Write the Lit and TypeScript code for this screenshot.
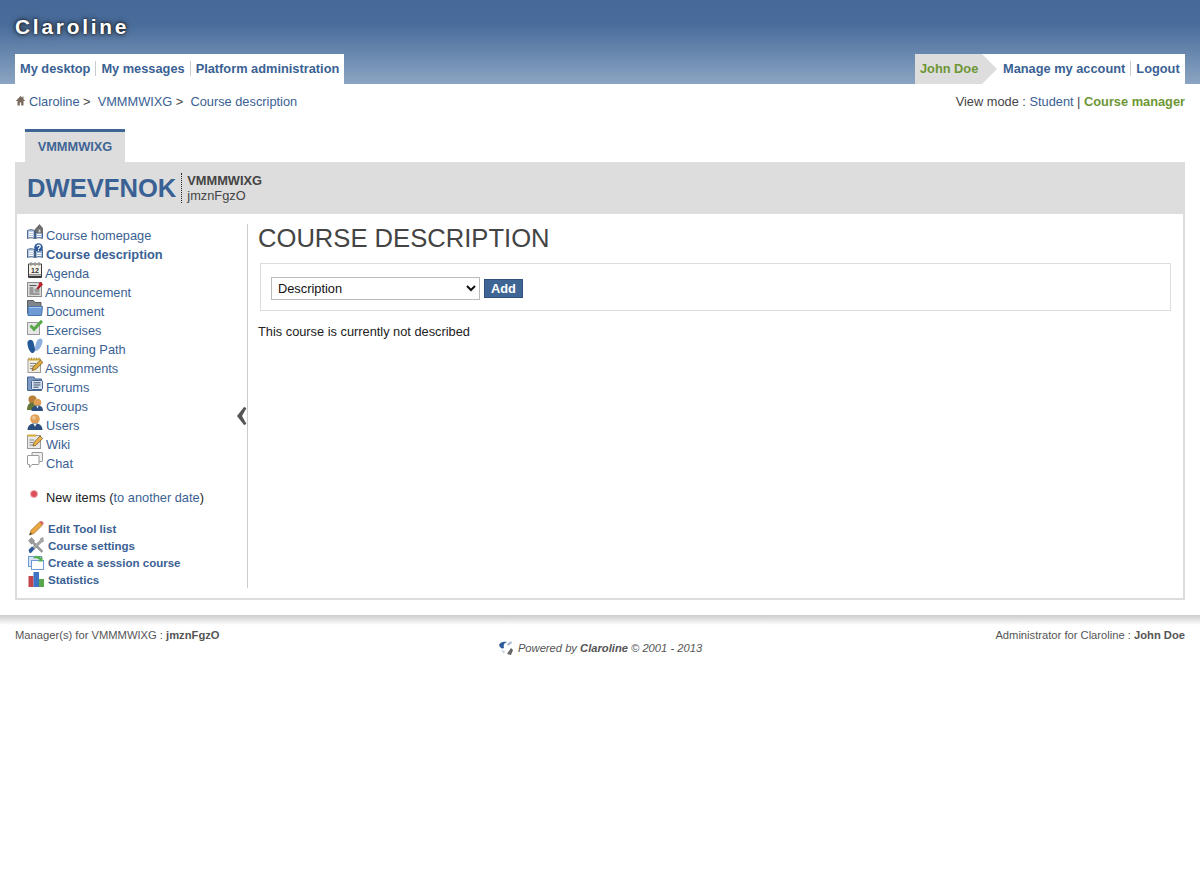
import { LitElement, html, css, svg } from 'lit';
import { customElement } from 'lit/decorators.js';

const book = svg`<path d="M.5 6.500c2-1 5-1 7 0v8c-2-1-5-1-7 0z" fill="#b9cbe2" stroke="#4f6a8f"/><path d="M8.500 6.500c2-1 5-1 7 0v8c-2-1-5-1-7 0z" fill="#9fb8d8" stroke="#4f6a8f"/><path d="M2 8.500h4M2 10.500h4M2 12.500h4M10 10.500h4M10 12.500h4" stroke="#fff"/><path d="M7.500 6h1v9h-1z" fill="#3d5778"/>`;

const icons: Record<string, unknown> = {
  home: svg`<path d="M5 1 .3 6h1.700v4.500h2.300V7.500h1.400v3H8V6h1.700L8 4.200V1.500H7v1.300z" fill="#7a6a60"/>`,
  homepage: svg`${book}<path d="M8 5.500 12.500.5 16 4.500V9H9z" fill="#6d6d6d" stroke="#555" stroke-width=".5"/><rect x="11.500" y="5.500" width="2" height="3" fill="#c9c9c9"/>`,
  description: svg`${book}<circle cx="11.500" cy="4.500" r="4.300" fill="#2d5a9a"/><path d="M9.800 3.500c.5-1.800 3.500-1.800 3.500 0 0 1.200-1.800 1.200-1.800 2.800" stroke="#fff" stroke-width="1.200" fill="none"/><circle cx="11.500" cy="7.500" r=".7" fill="#fff"/>`,
  agenda: svg`<rect x="1" y="1.500" width="14" height="14.500" rx="1" fill="#3a3a3a"/><rect x="2" y="2.500" width="12" height="10" fill="#f4f2e8"/><path d="M2 13h12v1H2z" fill="#bbb"/><path d="M4 0v4M8 0v4M12 0v4" stroke="#999" stroke-width="1.200"/><text x="8" y="10.500" font-size="7" font-weight="bold" text-anchor="middle" fill="#333" font-family="Liberation Sans, sans-serif">12</text>`,
  announcement: svg`<rect x=".5" y="1.500" width="14" height="14" fill="#dcdcdc" stroke="#8a8a8a"/><path d="M2.500 4.500h7M2.500 7h4M2.500 9h4M2.500 11h4M2.500 13h10" stroke="#555"/><rect x="7.500" y="7.500" width="5" height="4" fill="#9a9a9a"/><path d="M9.500 7.500l4-6 2.500 2-5 5z" fill="#a81c28"/><circle cx="13.500" cy="3" r="1.800" fill="#c4222f"/>`,
  document: svg`<path d="M.5 .5h6l1.500 2h6v11H.5z" fill="#80858c" stroke="#5d5d5d"/><path d="M1 6.500h14.500L14.500 15.500H1z" fill="#6d9ad6" stroke="#4a74aa"/><path d="M2 7.500h12.500" stroke="#a9c6ec"/>`,
  exercises: svg`<rect x=".5" y="3.500" width="12" height="12" fill="#e6e6e6" stroke="#999"/><path d="M2.500 7.500 4.500 5.500 7 8 14 .8 16 3 7 12.500z" fill="#59a84a"/>`,
  path: svg`<path d="M.5 4c1.500-3 5-3 6 .5l1.500 6c.5 3-1.500 5-3 4.500C2.500 14 0 8 .5 4z" fill="#245796"/><path d="M8 13c0-5 1-10 3.500-12 2.500-1.500 4.500 0 4 3-.5 4-3.500 9-7.500 9z" fill="#8db0de"/>`,
  assignments: svg`<rect x="1" y="2.500" width="12.500" height="13" fill="#f1eee0" stroke="#999"/><path d="M1 1.500h12.500v2H1z" fill="#d5ac3a"/><path d="M2 .5v2M4.500 .5v2M7 .5v2M9.500 .5v2M12 .5v2" stroke="#8a7a40" stroke-width=".7"/><path d="M3 6.500h6M3 9h4M3 11.500h3" stroke="#888"/><path d="M5 13.500l1-3.500 7.500-7 2.500 2.500-7.500 7z" fill="#dca83f" stroke="#6e5218" stroke-width=".7"/>`,
  forums: svg`<path d="M.5 1h6.500l1 2h6.500v11.500H.5z" fill="#7d9bc5" stroke="#47658f"/><rect x="4.500" y="4.500" width="11" height="9" rx="1" fill="#d6e4f4" stroke="#47658f"/><path d="M6.500 6.800h7M6.500 9h7M6.500 11.200h5" stroke="#3e4f66"/>`,
  groups: svg`<circle cx="5.500" cy="4.500" r="4" fill="#b9803a"/><path d="M0 15c0-5 2-7.500 5.500-7.500S10 10 10 15z" fill="#66773a"/><circle cx="10.500" cy="7.500" r="3.800" fill="#e0a058"/><path d="M4.500 16c0-3.800 2.500-5.500 6-5.500S16 12.200 16 16z" fill="#2c4f7e"/><path d="M9.300 10.800h2.400l-1.200 2.700z" fill="#e6eef7"/>`,
  users: svg`<circle cx="8" cy="5" r="4.800" fill="#e0a058"/><circle cx="7" cy="3.800" r="2" fill="#efc48f"/><path d="M.5 16c0-4.500 3.200-6.800 7.500-6.800s7.500 2.300 7.500 6.800z" fill="#2c4f7e"/><path d="M6 9.500h4L8 12.800z" fill="#eef2f7"/>`,
  wiki: svg`<rect x=".5" y="2.500" width="13" height="13" fill="#e8e8e8" stroke="#999"/><path d="M.5 1.500h9v2h-9z" fill="#d5ac3a"/><path d="M2.500 7h5M2.500 9.500h4M2.500 12h4" stroke="#888"/><path d="M6 13l1-3.500 6-6.500 2.700 2.500-7 7z" fill="#eab04a" stroke="#6e5218" stroke-width=".7"/>`,
  chat: svg`<path d="M5 .5h10c.5 0 .5 .5 .5 .5v8c0 .5-.5 .5-.5 .5H5z" fill="#efefef" stroke="#9a9a9a"/><path d="M1 3.500h10.500c.5 0 .5 .5 .5 .5v8c0 .5-.5 .5-.5 .5H5L2.500 15.500v-3H1c-.5 0-.5-.5-.5-.5V4c0-.5 .5-.5 .5-.5z" fill="#fff" stroke="#9a9a9a"/>`,
  dot: svg`<circle cx="8" cy="8" r="3.600" fill="#dc4f59" stroke="#f0b3b7"/>`,
  edit: svg`<path d="M1.500 15 3 10.200 11.500 2l3 3-8.500 8.500z" fill="#eaa63f" stroke="#8d6320" stroke-width=".6"/><path d="M11.500 2l3 3 1-1.200c.5-1-1.500-3.300-2.800-2.800z" fill="#d9635f"/><path d="M1.500 15 2.300 12.400 4 14z" fill="#333"/>`,
  settings: svg`<path d="M.5 3.500 3.500.5l3 3-.5 1.500 9 9-1.500 1.500-9-9-1.500.5z" fill="#9a9a9a" stroke="#777" stroke-width=".4"/><path d="M15 .5l-2.500 1-.5 2-8 7 2 2 8-7.500 1.500-.5z" fill="#a8a8a8" stroke="#777" stroke-width=".4"/><path d="M.5 13l3.500-3.500 2.500 2.500-3.500 4H1.500z" fill="#2d5a9a"/>`,
  session: svg`<rect x=".5" y="2.500" width="13" height="10" fill="#d6e4f5" stroke="#6e9bd6"/><rect x="3.500" y="6.500" width="12" height="9" fill="#fff" stroke="#6e9bd6"/><path d="M5 4.500c2-3.500 6-3.500 8-.5l1.500-1.200v4.700H10l1.700-1.500c-1.700-2-4.200-2.200-6.700-1.500z" fill="#55b04f"/>`,
  stats: svg`<rect x=".5" y="5" width="5" height="11" fill="#c4444c"/><rect x="5.500" y="1" width="5.500" height="15" fill="#3f74c4"/><rect x="11" y="8" width="5" height="8" fill="#5aa64c"/>`,
  logo: svg`<path d="M1 5c1-3 5-4 8-3-3 1-4 3-3 6-2 1-4 0-5-3z" fill="#2d5a9a"/><path d="M9 4l4-3 1 2-4 3z" fill="#aab8cc"/><path d="M3 10l4 1-1 3z" fill="#ccd4e0"/><path d="M9 14l4-6 2 2-2 5z" fill="#666"/>`,
};

const tools = [
  ['homepage', 'Course homepage'],
  ['description', 'Course description', 'current'],
  ['agenda', 'Agenda', 'tight'],
  ['announcement', 'Announcement', 'tight'],
  ['document', 'Document'],
  ['exercises', 'Exercises'],
  ['path', 'Learning Path'],
  ['assignments', 'Assignments', 'tight'],
  ['forums', 'Forums'],
  ['groups', 'Groups'],
  ['users', 'Users'],
  ['wiki', 'Wiki'],
  ['chat', 'Chat'],
];

const courseLinks = [
  ['edit', 'Edit Tool list'],
  ['settings', 'Course settings'],
  ['session', 'Create a session course'],
  ['stats', 'Statistics'],
];

@customElement('app-root')
export class AppRoot extends LitElement {
  static styles = css`
    :host {
      display: block;
      font-family: 'Liberation Sans', Arial, sans-serif;
      font-size: 12.8px;
      color: #444;
      background: #fff;
    }
    a {
      color: #3a6194;
      text-decoration: none;
    }
    svg {
      display: block;
      flex: none;
    }
    .header {
      height: 84px;
      box-sizing: border-box;
      padding: 15px 15px 0;
      background: linear-gradient(#46699a 0, #486c9b 24px, #8ba4c2 84px);
      display: flex;
      flex-direction: column;
      justify-content: space-between;
    }
    .logo {
      font-size: 20.8px;
      line-height: 24px;
      font-weight: 700;
      letter-spacing: 2.8px;
      color: #fff;
      text-shadow: 0 0 3px #111, 0 0 6px #222;
    }
    .nav {
      display: flex;
      justify-content: space-between;
      height: 30px;
    }
    .nav-group {
      display: flex;
      align-items: center;
      background: #fff;
      font-weight: 700;
      padding: 0 5px 2px;
      line-height: 15px;
    }
    .nav-group a + a {
      margin-left: 5px;
      padding-left: 5px;
      border-left: 1px solid #ccc;
    }
    .user-group {
      width: 270px;
      box-sizing: border-box;
      padding: 0 5px 0 0;
    }
    .user-group a {
      position: relative;
      top: -1px;
    }
    .user {
      align-self: stretch;
      width: 67px;
      box-sizing: border-box;
      padding-left: 5px;
      background: #ddd;
      color: #6d9634;
      line-height: 29px;
    }
    .arrow {
      width: 0;
      height: 0;
      border-style: solid;
      border-width: 15px 0 15px 15px;
      border-color: transparent transparent transparent #ddd;
      margin-right: 6px;
    }
    .crumbs {
      display: flex;
      justify-content: space-between;
      padding: 10px 15px 0;
      line-height: 15px;
    }
    .path {
      display: flex;
      align-items: center;
      white-space: pre;
    }
    .path svg {
      margin-right: 3px;
      margin-top: -3px;
    }
    .active-mode {
      color: #6d9634;
      font-weight: 700;
    }
    .tabs {
      display: flex;
      margin: 20px 15px 0 25px;
    }
    .tab {
      width: 100px;
      box-sizing: border-box;
      height: 33px;
      border-top: 3px solid #3f6595;
      background: #ddd;
      font-weight: 700;
      color: #3f6595;
      text-align: center;
      line-height: 29px;
    }
    .course {
      margin: 0 15px;
      border: 2px solid #ddd;
      border-top: 0;
    }
    .title {
      height: 52px;
      box-sizing: border-box;
      background: #ddd;
      display: flex;
      align-items: center;
      padding: 0 10px;
      margin: 0 -2px;
    }
    .code {
      font-size: 25.6px;
      font-weight: 700;
      color: #3a6194;
      margin-right: 5px;
      padding-left: 2px;
    }
    .info {
      border-left: 1px dotted #222;
      padding-left: 5px;
      line-height: 15px;
      color: #444;
    }
    .info b {
      display: block;
    }
    .body {
      display: flex;
      padding-top: 10px;
      padding-bottom: 10px;
      min-height: 364px;
    }
    .side {
      position: relative;
      width: 231px;
      flex: none;
      box-sizing: border-box;
      border-right: 1px solid #ccc;
      padding-left: 10px;
    }
    .tool {
      display: flex;
      height: 19px;
      line-height: 15px;
      padding-top: 4px;
      box-sizing: border-box;
    }
    .tool svg {
      margin-top: -4px;
      margin-right: 3px;
    }
    .tool.tight svg {
      margin-right: 2px;
    }
    .tool.current a {
      font-weight: 700;
    }
    .news {
      display: flex;
      align-items: center;
      margin-top: 17px;
      height: 19px;
      color: #222;
    }
    .news svg {
      margin: -8px 4px 0 -1px;
    }
    .links {
      margin-top: 13px;
    }
    .link {
      display: flex;
      align-items: flex-end;
      height: 17px;
      font-size: 11.52px;
      line-height: 15px;
      font-weight: 700;
    }
    .link svg {
      margin: 0 4px 1px 1px;
    }
    .collapse {
      position: absolute;
      right: 0;
      top: 182px;
    }
    .main {
      flex: 1;
      padding: 0 12px 0 10px;
      color: #222;
    }
    h1 {
      margin: 0;
      font-size: 25.6px;
      line-height: 29px;
      font-weight: 400;
      color: #444;
    }
    .form {
      margin: 10px 0 13px 2px;
      height: 48px;
      box-sizing: border-box;
      border: 1px solid #ddd;
      display: flex;
      align-items: center;
      padding-left: 10px;
    }
    select {
      width: 209px;
      height: 23px;
      box-sizing: border-box;
      font-family: inherit;
      font-size: 12.8px;
      color: #111;
      background: #fff;
      border: 1px solid #bbb;
      padding-left: 2px;
      margin: 2px 4px 0 0;
    }
    button {
      width: 39px;
      height: 19px;
      margin-top: 2px;
      padding: 0;
      box-sizing: border-box;
      background: #3f6595;
      border: 1px solid #2f5380;
      color: #fff;
      font-family: inherit;
      font-size: 12.8px;
      font-weight: 700;
    }
    .empty {
      line-height: 15px;
      margin: 0;
    }
    .shadow {
      height: 10px;
      margin-top: 15px;
      background: linear-gradient(#ccc, #fff);
    }
    .footer {
      display: flex;
      justify-content: space-between;
      padding: 3px 15px 0;
      font-size: 11.2px;
      line-height: 15px;
      color: #555;
    }
    .powered {
      display: flex;
      justify-content: center;
      align-items: center;
      gap: 4px;
      margin-top: -3px;
      font-size: 11.2px;
      font-style: italic;
      line-height: 15px;
      color: #555;
    }
  `;

  icon(name: string, size = 16) {
    return html`<svg width=${size} height=${size} viewBox="0 0 16 16">${icons[name]}</svg>`;
  }

  render() {
    return html`
      <div class="header">
        <div class="logo">Claroline</div>
        <div class="nav">
          <div class="nav-group">
            <a href="#">My desktop</a><a href="#">My messages</a><a href="#">Platform administration</a>
          </div>
          <div class="nav-group user-group">
            <span class="user">John Doe</span><span class="arrow"></span>
            <a href="#">Manage my account</a><a href="#">Logout</a>
          </div>
        </div>
      </div>
      <div class="crumbs">
        <div class="path">
          <svg width="11" height="11" viewBox="0 0 10 11">${icons.home}</svg><a href="#">Claroline</a> &gt;  <a href="#">VMMMWIXG</a> &gt;  <a href="#">Course description</a>
        </div>
        <div>View mode : <a href="#">Student</a> | <span class="active-mode">Course manager</span></div>
      </div>
      <div class="tabs"><div class="tab">VMMMWIXG</div></div>
      <div class="course">
        <div class="title">
          <div class="code">DWEVFNOK</div>
          <div class="info"><b>VMMMWIXG</b>jmznFgzO</div>
        </div>
        <div class="body">
          <div class="side">
            ${tools.map(
              ([icon, label, mod]) => html`
                <div class="tool ${mod ?? ''}">${this.icon(icon)}<a href="#">${label}</a></div>
              `
            )}
            <div class="news">${this.icon('dot')}<span>New items (<a href="#">to another date</a>)</span></div>
            <div class="links">
              ${courseLinks.map(
                ([icon, label]) => html`<div class="link">${this.icon(icon)}<a href="#">${label}</a></div>`
              )}
            </div>
            <svg class="collapse" width="11" height="20" viewBox="0 0 11 20">
              <path d="M8 1 1 10l7 9 2.500-1L6 10l4.500-8z" fill="#555"/>
            </svg>
          </div>
          <div class="main">
            <h1>COURSE DESCRIPTION</h1>
            <div class="form">
              <select><option>Description</option></select>
              <button>Add</button>
            </div>
            <p class="empty">This course is currently not described</p>
          </div>
        </div>
      </div>
      <div class="shadow"></div>
      <div class="footer">
        <div>Manager(s) for VMMMWIXG : <b>jmznFgzO</b></div>
        <div>Administrator for Claroline : <b>John Doe</b></div>
      </div>
      <div class="powered">${this.icon('logo')}<span>Powered by <b>Claroline</b> © 2001 - 2013</span></div>
    `;
  }
}
